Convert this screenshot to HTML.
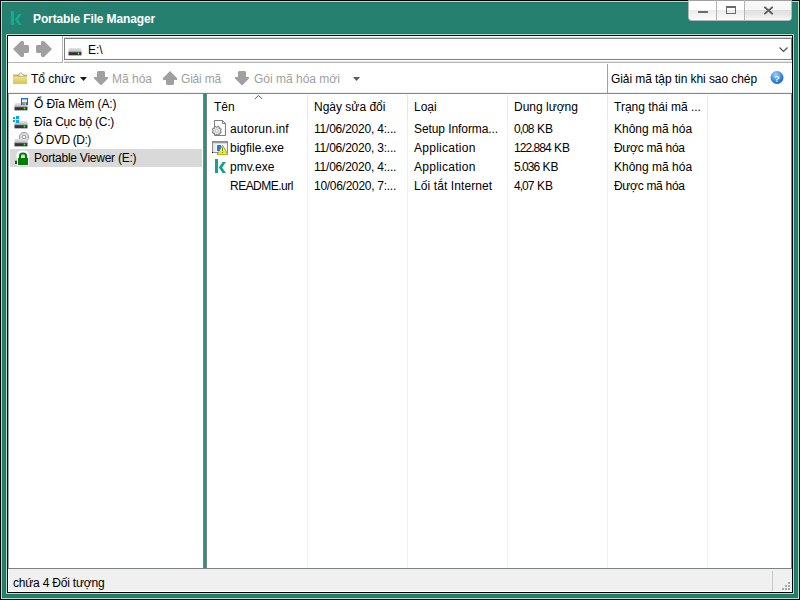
<!DOCTYPE html>
<html><head><meta charset="utf-8">
<style>
*{margin:0;padding:0;box-sizing:border-box}
html,body{width:800px;height:600px;overflow:hidden;background:#000}
body{position:relative;font-family:"Liberation Sans",sans-serif;font-size:12px;color:#000}
.a{position:absolute}
.t{position:absolute;white-space:nowrap;line-height:14px}
#frame{left:1px;top:1px;width:798px;height:598px;border:1px solid #a6e8d4;background:#258070}
#inner{left:6px;top:34px;width:788px;height:560px;border:1px solid #a6e8d4}
#client{left:7px;top:35px;width:786px;height:558px;border:1px solid #000;background:#fff}
.g{color:#a0a0a0}
</style></head><body>
<div id="frame" class="a"></div>
<div class="a" style="left:2px;top:2px;width:796px;height:596px;border:1px solid #207866"></div>
<div class="a" style="left:5px;top:33px;width:790px;height:562px;border:1px solid #1e7664"></div>
<div id="inner" class="a"></div>
<div id="client" class="a"></div>

<!-- title -->

<div class="t" style="left:33px;top:12px;font-weight:bold;color:#fff;font-size:12px;letter-spacing:-0.125px">Portable File Manager</div>

<!-- window buttons -->
<div class="a" style="left:688px;top:0;width:104px;height:21px;background:linear-gradient(#ffffff 0,#ffffff 45%,#ececec 50%,#f2f2f2 70%,#fcfcfc 100%);border:1px solid #b8b8b8;border-top-color:#a0a0a0;border-radius:0 0 4px 4px"></div>
<div class="a" style="left:716px;top:0;width:1px;height:20px;background:#b4b4b4"></div>
<div class="a" style="left:745px;top:1px;width:46px;height:19px;background:linear-gradient(#f8f8f8 0,#f6f6f6 45%,#e0e0e0 50%,#e6e6e6 70%,#f8f8f8 100%);border-bottom-right-radius:3px"></div>
<div class="a" style="left:744px;top:0;width:1px;height:20px;background:#b4b4b4"></div>
<div class="a" style="left:698px;top:11px;width:10px;height:2px;background:#6a6a6a"></div>
<div class="a" style="left:726px;top:6px;width:10px;height:8px;border:1px solid #6a6a6a;border-top-width:2px"></div>
<svg class="a" style="left:760px;top:4px" width="17" height="13" viewBox="0 0 17 13"><path d="M5 3.5 L12 9.5 M12 3.5 L5 9.5" stroke="#5e5e5e" stroke-width="1.9" stroke-linecap="square"/></svg>

<!-- nav -->
<div class="a" style="left:8px;top:36px;width:55px;height:27px;border-right:1px solid #b4b4b4;border-bottom:1px solid #b4b4b4"></div>

<!-- address -->
<div class="a" style="left:64px;top:37px;width:728px;height:1px;background:#d6d6d6"></div>
<div class="a" style="left:64px;top:61px;width:728px;height:1px;background:#e6e6e6"></div>
<div class="a" style="left:64px;top:62px;width:728px;height:1px;background:#b4b4b4"></div>
<div class="a" style="left:64px;top:38px;width:728px;height:22px;border:1px solid #7e7e7e"></div>
<div class="t" style="left:88px;top:43px">E:\</div>


<!-- toolbar -->
<div class="a" style="left:8px;top:92px;width:784px;height:1px;background:#eef0f2"></div>
<div class="a" style="left:8px;top:93px;width:784px;height:1px;background:#80868e"></div>
<div class="t" style="left:31px;top:72px">Tổ chức</div>
<div class="t g" style="left:112px;top:72px">Mã hóa</div>
<div class="t g" style="left:181px;top:72px;letter-spacing:-0.208px">Giải mã</div>
<div class="t g" style="left:254px;top:72px">Gói mã hóa mới</div>
<div class="a" style="left:607px;top:64px;width:1px;height:29px;background:#a0a0a0"></div>
<div class="t" style="left:611px;top:72px;letter-spacing:-0.074px">Giải mã tập tin khi sao chép</div>

<!-- tree -->
<div class="a" style="left:8px;top:94px;width:1px;height:474px;background:#a0a4aa"></div>
<div class="a" style="left:10px;top:149px;width:192px;height:18px;background:#d9d9d9"></div>
<div class="t" style="left:34px;top:97px;letter-spacing:-0.115px">Ổ Đĩa Mềm (A:)</div>
<div class="t" style="left:34px;top:115px;letter-spacing:-0.214px">Đĩa Cục bộ (C:)</div>
<div class="t" style="left:34px;top:133px;letter-spacing:-0.444px">Ổ DVD (D:)</div>
<div class="t" style="left:34px;top:151px;letter-spacing:-0.242px">Portable Viewer (E:)</div>

<!-- splitter -->
<div class="a" style="left:203px;top:93px;width:4px;height:476px;background:#7c8088"></div>
<div class="a" style="left:204px;top:93px;width:2px;height:475px;background:#20967a"></div>

<!-- list header -->
<div class="a" style="left:307px;top:95px;width:1px;height:24px;background:#e5e5e5"></div>
<div class="a" style="left:407px;top:95px;width:1px;height:24px;background:#e5e5e5"></div>
<div class="a" style="left:507px;top:95px;width:1px;height:24px;background:#e5e5e5"></div>
<div class="a" style="left:607px;top:95px;width:1px;height:24px;background:#e5e5e5"></div>
<div class="a" style="left:707px;top:95px;width:1px;height:24px;background:#e5e5e5"></div>
<div class="a" style="left:307px;top:119px;width:1px;height:449px;background:#e8f0fc"></div>
<div class="a" style="left:407px;top:119px;width:1px;height:449px;background:#e8f0fc"></div>
<div class="a" style="left:507px;top:119px;width:1px;height:449px;background:#e8f0fc"></div>
<div class="a" style="left:607px;top:119px;width:1px;height:449px;background:#e8f0fc"></div>
<div class="a" style="left:707px;top:119px;width:1px;height:449px;background:#e8f0fc"></div>
<div class="t" style="left:214px;top:100px">Tên</div>
<div class="t" style="left:314px;top:100px">Ngày sửa đổi</div>
<div class="t" style="left:414px;top:100px">Loại</div>
<div class="t" style="left:514px;top:100px">Dung lượng</div>
<div class="t" style="left:614px;top:100px">Trạng thái mã ...</div>

<!-- rows -->
<div class="t" style="left:230px;top:122px;letter-spacing:0.200px">autorun.inf</div>
<div class="t" style="left:230px;top:141px">bigfile.exe</div>
<div class="t" style="left:230px;top:160px">pmv.exe</div>
<div class="t" style="left:230px;top:179px;letter-spacing:-0.522px">README.url</div>
<div class="t" style="left:314px;top:122px;letter-spacing:-0.219px">11/06/2020, 4:...</div>
<div class="t" style="left:314px;top:141px;letter-spacing:-0.219px">11/06/2020, 3:...</div>
<div class="t" style="left:314px;top:160px;letter-spacing:-0.219px">11/06/2020, 4:...</div>
<div class="t" style="left:314px;top:179px;letter-spacing:-0.281px">10/06/2020, 7:...</div>
<div class="t" style="left:414px;top:122px;letter-spacing:-0.080px">Setup Informa...</div>
<div class="t" style="left:414px;top:141px;letter-spacing:0.270px">Application</div>
<div class="t" style="left:414px;top:160px;letter-spacing:0.270px">Application</div>
<div class="t" style="left:414px;top:179px;letter-spacing:0.093px">Lối tắt Internet</div>
<div class="t" style="left:514px;top:122px"><span style="letter-spacing:-0.95px">0,08</span> KB</div>
<div class="t" style="left:514px;top:141px"><span style="letter-spacing:-0.95px">122.884</span> KB</div>
<div class="t" style="left:514px;top:160px"><span style="letter-spacing:-0.95px">5.036</span> KB</div>
<div class="t" style="left:514px;top:179px"><span style="letter-spacing:-0.95px">4,07</span> KB</div>
<div class="t" style="left:614px;top:122px">Không mã hóa</div>
<div class="t" style="left:614px;top:141px;letter-spacing:-0.300px">Được mã hóa</div>
<div class="t" style="left:614px;top:160px">Không mã hóa</div>
<div class="t" style="left:614px;top:179px;letter-spacing:-0.300px">Được mã hóa</div>

<!-- status -->
<div class="a" style="left:791px;top:93px;width:1px;height:476px;background:#80868e"></div>
<div class="a" style="left:8px;top:568px;width:784px;height:1px;background:#7c8088"></div>
<div class="a" style="left:8px;top:569px;width:784px;height:23px;background:#f0f0f0;border-left:1px solid #fff;border-bottom:1px solid #fff"></div>
<div class="a" style="left:772px;top:571px;width:1px;height:20px;background:#c8c8c8"></div>
<div class="t" style="left:13px;top:576px;letter-spacing:-0.200px">chứa 4 Đối tượng</div>

<svg class="a" style="left:0;top:0;pointer-events:none" width="800" height="600" viewBox="0 0 800 600">
<defs>
 <linearGradient id="dtop" x1="0" y1="0" x2="0" y2="1"><stop offset="0" stop-color="#e4e4e4"/><stop offset="1" stop-color="#bcbec0"/></linearGradient>
 <linearGradient id="dfront" x1="0" y1="0" x2="0" y2="1"><stop offset="0" stop-color="#4a4a4a"/><stop offset="1" stop-color="#1e1e1e"/></linearGradient>
 <linearGradient id="fold" x1="0" y1="0" x2="0" y2="1"><stop offset="0" stop-color="#f0e48a"/><stop offset="1" stop-color="#d8c450"/></linearGradient>
 <radialGradient id="help" cx="0.4" cy="0.3" r="0.7"><stop offset="0" stop-color="#9ad6fc"/><stop offset="0.6" stop-color="#4190e4"/><stop offset="1" stop-color="#2060c4"/></radialGradient>
 <g id="drive">
  <path d="M1.2 0 H12.8 L13.8 3.7 H0.2 Z" fill="url(#dtop)"/>
  <rect x="0.5" y="3.7" width="13" height="3.6" rx="0.5" fill="url(#dfront)" stroke="#a4a8ac" stroke-width="0.6"/>
  <circle cx="10.5" cy="5.5" r="0.9" fill="#3cf03c"/>
 </g>
</defs>
<!-- title K -->
<path d="M11 11 H14 V25 H11 Z" fill="#14ad8f"/>
<path d="M18.6 14 H21.6 L18 19.5 L21.6 25 H18.6 L15 19.5 Z" fill="#14ad8f"/>
<!-- nav arrows -->
<path d="M13 49 L20.5 41.5 Q21 41 21.5 41 H23 L24 42 V45 H28 L29 46 V52 L28 53 H24 V56 L23 57 H21.5 Q21 57 20.5 56.5 Z" fill="#a0a0a0"/>
<path d="M52 49 L44.5 41.5 Q44 41 43.5 41 H42 L41 42 V45 H37 L36 46 V52 L37 53 H41 V56 L42 57 H43.5 Q44 57 44.5 56.5 Z" fill="#a0a0a0"/>
<!-- address drive -->
<use href="#drive" x="68" y="48"/>
<!-- address chevron -->
<path d="M779.5 47.5 L783.5 51.5 L787.5 47.5" stroke="#505050" stroke-width="1.2" fill="none"/>
<!-- folder -->
<path d="M13 74.5 H27 V84 H13 Z" fill="#cdb95c"/>
<path d="M17.8 75.8 L20.8 72.6 L25.2 76.8 Z" fill="#fff" stroke="#7f8ca0" stroke-width="0.8"/>
<path d="M13 76.5 H26.8 V83.2 Q26.8 84 26 84 H13.8 Q13 84 13 83.2 Z" fill="url(#fold)"/>
<!-- dropdown triangles -->
<path d="M80 77 H87 L83.5 81 Z" fill="#1a1a1a"/>
<path d="M353 77 H360 L356.5 81 Z" fill="#5a5a5a"/>
<!-- down arrow -->
<path d="M98 71 H104 L105 72 V77 H108 V78.5 L101.5 85 H100.5 L94 78.5 V77 H97 V72 Z" fill="#a0a0a0"/>
<!-- up arrow -->
<path d="M170 71 L177 78 V80 H174 V84 L173 85 H167 L166 84 V80 H163 V78 Z" fill="#a0a0a0"/>
<!-- down arrow 2 -->
<path d="M239 71 H245 L246 72 V77 H249 V78.5 L242.5 85 H241.5 L235 78.5 V77 H238 V72 Z" fill="#a0a0a0"/>
<!-- help -->
<circle cx="777" cy="77.5" r="6.5" fill="url(#help)"/>
<text x="777" y="81.5" font-family="Liberation Sans" font-size="9.5" font-weight="bold" fill="#f4f8ff" text-anchor="middle">?</text>
<!-- tree icons -->
<use href="#drive" x="14" y="103"/>
<rect x="21" y="98" width="7" height="7" fill="#5a5a5a"/>
<rect x="21.8" y="98" width="5.4" height="1.4" fill="#1a74d0"/>
<rect x="22" y="99.4" width="5" height="3" fill="#f0eeea"/>
<rect x="22.5" y="103" width="3.5" height="2" fill="#c4c4c4"/>
<rect x="23.3" y="103.5" width="1.2" height="1.2" fill="#303030"/>
<use href="#drive" x="14" y="121"/>
<rect x="13" y="117" width="2" height="2" fill="#05a8ec"/>
<rect x="16" y="116" width="3" height="3" fill="#05a8ec"/>
<rect x="13" y="120" width="2" height="2" fill="#05a8ec"/>
<rect x="16" y="120" width="3" height="3" fill="#05a8ec"/>
<circle cx="24" cy="137" r="4.7" fill="#d6dbdc" stroke="#9c9c9c" stroke-width="1"/>
<circle cx="24" cy="137" r="3" fill="#e6eaea"/>
<circle cx="24" cy="137" r="1.9" fill="#fff" stroke="#8c8c8c" stroke-width="1"/>
<use href="#drive" x="14" y="139"/>
<!-- lock -->
<path d="M18.5 158.5 V155.5 Q18.5 152.5 23 152.5 Q27.5 152.5 27.5 155.5 V158.5" fill="none" stroke="#fff" stroke-width="4"/>
<rect x="17" y="157" width="12" height="9" fill="#fff"/>
<path d="M20 158.5 V155.8 Q20 153.5 23 153.5 Q26 153.5 26 155.8 V158.5" fill="none" stroke="#008000" stroke-width="2"/>
<rect x="18" y="158" width="10" height="7" fill="#008000"/>
<rect x="15" y="160.7" width="2" height="3.3" fill="#404040"/>
<!-- sort arrow -->
<path d="M254.8 99 L258.5 95.5 L262.2 99" stroke="#606060" stroke-width="1" fill="none"/>
<!-- autorun icon -->
<path d="M214.5 120.5 H222.5 L225.5 123.5 V135.5 H214.5 Z" fill="#fff" stroke="#808080" stroke-width="1"/>
<path d="M222.5 120.5 V123.5 H225.5" fill="none" stroke="#808080" stroke-width="1"/>
<g transform="translate(216.8 130.8)">
 <path d="M3.30 0.11 L4.51 0.88 L3.82 2.57 L2.41 2.26 L2.26 2.41 L2.57 3.82 L0.88 4.51 L0.11 3.30 L-0.11 3.30 L-0.88 4.51 L-2.57 3.82 L-2.26 2.41 L-2.41 2.26 L-3.82 2.57 L-4.51 0.88 L-3.30 0.11 L-3.30 -0.11 L-4.51 -0.88 L-3.82 -2.57 L-2.41 -2.26 L-2.26 -2.41 L-2.57 -3.82 L-0.88 -4.51 L-0.11 -3.30 L0.11 -3.30 L0.88 -4.51 L2.57 -3.82 L2.26 -2.41 L2.41 -2.26 L3.82 -2.57 L4.51 -0.88 L3.30 -0.11 Z" fill="#e4e8ea" stroke="#767676" stroke-width="1"/>
 <circle r="1.4" fill="#fff" stroke="#9a9a9a" stroke-width="0.6"/>
</g>
<!-- bigfile icon -->
<rect x="212.5" y="141.5" width="15" height="11" fill="#f6f6f6" stroke="#8c8c8c" stroke-width="1"/>
<rect x="213" y="142" width="14" height="1.3" fill="#9a9a9a"/>
<rect x="213" y="143.5" width="2.5" height="8.5" fill="#e6e6e6"/>
<rect x="217" y="145" width="4" height="6" fill="#1a7ee6"/>
<path d="M222.5 145.3 L227.8 154.6 H217.2 Z" fill="#fbfbf0" stroke="#8c8c10" stroke-width="0.9"/>
<path d="M220.2 150.5 H224.8 L227 154.2 H218 Z" fill="#f2ee00"/>
<rect x="222" y="147.5" width="1" height="3.5" fill="#7a7a10"/>
<rect x="222" y="152" width="1" height="1" fill="#7a7a10"/>
<rect x="212" y="152" width="1" height="1" fill="#000"/>
<!-- pmv K -->
<path d="M215 159 H218 V173 H215 Z" fill="#14a488"/>
<path d="M222.5 162 H226 L222.2 167.4 L226 173 H222.5 L218.8 167.4 Z" fill="#14a488"/>
<!-- resize grip -->
<g fill="#a8a8a8">
<rect x="788" y="582" width="2" height="2"/>
<rect x="785" y="585" width="2" height="2"/><rect x="788" y="585" width="2" height="2"/>
<rect x="782" y="588" width="2" height="2"/><rect x="785" y="588" width="2" height="2"/><rect x="788" y="588" width="2" height="2"/>
</g>
</svg>
</body></html>
